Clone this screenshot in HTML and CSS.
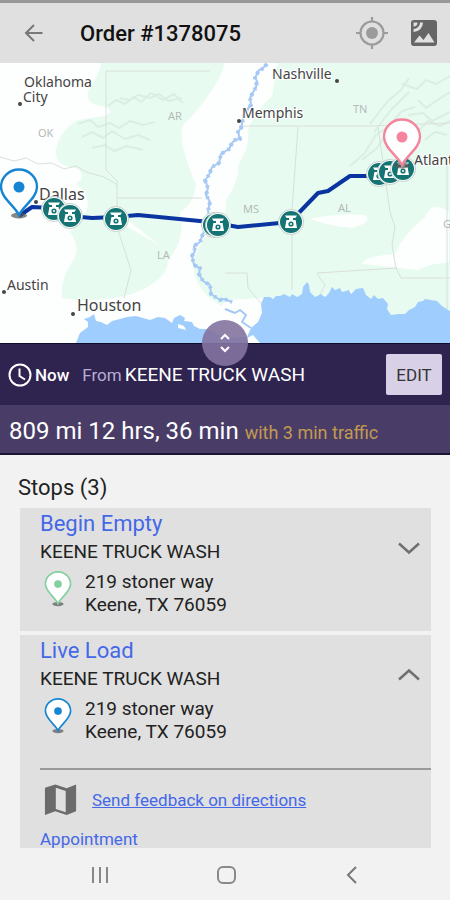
FILE: index.html
```
<!DOCTYPE html>
<html lang="en">
<head>
    <meta charset="UTF-8">
    <meta name="viewport" content="width=device-width, initial-scale=1.0">
    <title>Order #1378075</title>
    <link rel="stylesheet" href="styles.css">
</head>
<body>
    <header class="app-bar">
        <button class="icon-btn" aria-label="Back">
            <svg width="24" height="24" viewBox="0 0 24 24" fill="none" stroke="#777" stroke-width="2"><path d="M20.500 12H4M12 4L4 12L12 20"/></svg>
        </button>
        <h1>Order #1378075</h1>
        <button class="icon-btn" aria-label="My location">
            <svg width="34" height="34" viewBox="0 0 34 34" fill="none" stroke="#9b9b9b" stroke-width="2.200">
                <circle cx="17" cy="17" r="11.500"/>
                <circle cx="17" cy="17" r="6" fill="#9b9b9b" stroke="none"/>
                <path d="M17 1v5M17 28v5M1 17h5M28 17h5"/>
            </svg>
        </button>
        <button class="icon-btn" aria-label="Satellite view">
            <svg width="28" height="28" viewBox="0 0 28 28">
                <rect x="1" y="1" width="26" height="26" rx="3" fill="#666"/>
                <path d="M3.500 3.500h4a4 4 0 0 1-4 4zM10 3.500h3a9.500 9.500 0 0 1-9.500 9.500v-3a6.500 6.500 0 0 0 6.500-6.500zM4 23.500l5.500-7 4 4.500 5-7 6 9.500z" fill="#e0e0e0"/>
            </svg>
        </button>
    </header>

    <section class="map" aria-label="Route map">
        <svg class="map-canvas" viewBox="0 63 450 280" preserveAspectRatio="xMidYMid slice">
            <defs>
                <symbol id="scale" viewBox="0 0 28 28">
                    <circle cx="14" cy="14" r="12.500" fill="#fff" stroke="#c3d0cc"/>
                    <circle cx="14" cy="14" r="11" fill="#147474"/>
                    <path d="M8 7.500h12l-1.600 2.600H9.600z" fill="#fff"/>
                    <path d="M12 10h4v2h2.600l1.400 8H8l1.400-8H12z" fill="#fff"/>
                    <circle cx="14" cy="16" r="2.600" fill="#147474"/>
                    <circle cx="14" cy="16" r="1" fill="#fff"/>
                </symbol>
                <symbol id="pin" viewBox="0 0 40 52">
                    <ellipse class="pin-shadow" cx="20" cy="47.500" rx="8" ry="3"/>
                    <path d="M20 47C16 38 2 30 2 19a18 17.500 0 0 1 36 0C38 30 24 38 20 47z" fill="#fff" stroke="currentColor" stroke-width="2.400"/>
                    <circle cx="20" cy="19" r="5.500" fill="currentColor"/>
                </symbol>
            </defs>

            <rect x="0" y="63" width="450" height="280" fill="#fdfefe"/>

            <!-- forests -->
            <g class="forest">
                <path d="M102 63H225Q221 78 208 96T184 124Q178 134 186 158T196 184Q194 204 180 212Q186 240 168 260Q168 280 132 294Q96 304 62 298Q60 280 72 262Q82 250 70 232Q84 220 88 206Q88 192 76 184Q88 176 76 168Q54 166 56 150Q60 130 78 120L106 116Q116 108 100 106Q86 104 88 92Q96 80 102 63z"/>
                <path d="M278 63H450V343H394L380 302L350 290L310 298L262 298L248 300L226 308Q194 294 193 262Q202 236 216 228Q228 214 226 200Q240 180 238 165Q250 148 248 130Q256 110 272 96z"/>
            </g>
            <g fill="#fdfefe">
                <path d="M362 264Q364 256 395 254Q402 236 425 217Q432 200 449 212V262L430 265L418 270L400 268z"/>
                <path d="M309 219Q334 213 365 215Q374 222 352 228Q330 226 309 219z"/>
                <path d="M128 220L160 246L150 240L126 226z"/>
                <path d="M226 300L262 298L258 343H215L205 330z"/>
            </g>

            <!-- hills -->
            <g class="relief">
                <path d="M108 106l8-6 9 4 9-7 7 5 10-9 12 7 11-6 9 9"/>
                <path d="M120 98l9 2 9-5 12 3 9-4 9 7 14-3"/>
                <path d="M78 124l12-4 8 7 12-4 9 5 11-7 13 4 12-3"/>
                <path d="M82 137l10-5 11 6 9-7 13 8 13-4 12 5"/>
                <path d="M92 148l13-3 9 6 13-5 16 4"/>
                <path d="M370 124l10-13 8-10 13-11 8-12M374 132l17-22 18-18"/>
                <path d="M350 166l14-12 12-19 12-8 14-16 13-4M362 160l15-12 9-14"/>
                <path d="M418 100l8 8 10-7 14-9M408 115l15-2 9 8 18-9M418 131l10-10 12 5 10-5"/>
                <path d="M402 84l15 5 9-9 10 4 14-8M425 140l10-8 12 3"/>
            </g>

            <!-- state lines -->
            <g class="border">
                <path d="M106 71H210M106 71V170L117 181V198H202M117 198L118 230L131 270L124 298"/>
                <path d="M0 157l14 4 12-3 12 6 14-1 12 6 12-3 10 6 18 5 14 8"/>
                <path d="M239 126H370L450 123M298 127L292 210V290M378 127L390 212L395 227L392 245L396 268L401 278H450"/>
                <path d="M317 273L397 268M225 273H247L248 288L261 303M317 274L325 285L320 295M447 160V324"/>
            </g>

            <!-- gulf -->
            <path fill="#9fcdfd" d="M76 343L80 333L88 327L88 322L84 319L90 317L94 314L96 321L101 322L107 325L112 321L120 319L127 317L136 316L143 318L150 320L158 317L165 318L172 323L174 318L180 315L185 318L184 321L192 322L194 326L200 329L206 329L212 331L225 338L247 337L251 328L258 322L262 313L261 304L264 297L270 297L273 299L276 296L280 296L284 294L290 297L292 294L297 297L302 294L303 287L307 282L309 285L310 292L315 297L321 294L325 297L329 293L332 287L335 290L340 288L342 292L349 290L351 294L356 289L363 288L366 295L371 299L374 295L378 299L383 298L388 304L387 309L391 315L398 314L405 314L409 310L415 307L418 302L423 301L425 299L431 300L437 301L442 306L448 310L450 311V343z"/>
            <path fill="#fdfefe" d="M178 324l6 2 2 4-8-2zM247 338l6-3 7 8h-12z"/>

            <!-- Mississippi river -->
            <g class="river">
                <path id="river" d="M267 64l-5 5-3 1-4 8 2 3-1 6-6 11 1 7-5 6-3 8-2 9-3 4 2 7-5 1-3 3-3 6-8 5-2 9-7 4-3 8-4 5 3 8-2 7 4 7-2 9 2 9-1 9-5 2-4 11-6 4 1 5-3 5 2 9 6 3-1 6 4 7 7 4 1 9 9 6 4-1 8 3"/>
                <use class="river-banks" href="#river"/>
                <path d="M225 309l10 4 5-3 6 5-4 7 9 6"/>
            </g>

            <!-- route -->
            <path class="route" d="M19 216L32 207L52 208L70 216L92 218L116 217L138 215L210 222L238 227L290 222L318 193L328 191L350 176H376"/>

            <g fill="#444">
                <circle cx="20" cy="104" r="2"/><circle cx="337" cy="81" r="2"/><circle cx="239" cy="121" r="2"/>
                <circle cx="36" cy="202" r="2"/><circle cx="4" cy="292" r="2"/><circle cx="73" cy="314" r="2"/>
            </g>
            <g class="city">
                <text x="24" y="87">Oklahoma</text>
                <text x="23" y="102">City</text>
                <text x="272" y="79">Nashville</text>
                <text x="242" y="118">Memphis</text>
                <text x="7" y="290">Austin</text>
                <text x="414" y="165">Atlanta</text>
                <text class="big" x="39" y="200">Dallas</text>
                <text class="big" x="77" y="311">Houston</text>
            </g>
            <g class="state">
                <text x="38" y="137">OK</text>
                <text x="168" y="120">AR</text>
                <text x="353" y="113">TN</text>
                <text x="157" y="259">LA</text>
                <text x="243" y="213">MS</text>
                <text x="338" y="212">AL</text>
                <text x="443" y="228">GA</text>
            </g>

            <use href="#scale" x="40" y="195" width="28" height="28"/>
            <use href="#scale" x="56" y="202" width="28" height="28"/>
            <use href="#scale" x="102" y="205" width="28" height="28"/>
            <use href="#scale" x="200" y="211" width="28" height="28"/>
            <use href="#scale" x="204" y="211" width="28" height="28"/>
            <use href="#scale" x="277" y="208" width="28" height="28"/>
            <use href="#scale" x="365" y="160" width="28" height="28"/>
            <use href="#scale" x="376" y="158" width="28" height="28"/>
            <use href="#scale" x="389" y="155" width="28" height="28"/>
            <use class="pin-blue" href="#pin" x="-1" y="168" width="40" height="52"/>
            <use class="pin-pink" href="#pin" x="382" y="118" width="40" height="52"/>
        </svg>
        <button class="map-handle" aria-label="Resize map">
            <svg width="16" height="24" viewBox="0 0 16 24" fill="none" stroke="#fff" stroke-width="2"><path d="M4 8l4-4 4 4M4 16l4 4 4-4"/></svg>
        </button>
    </section>

    <section class="origin">
        <svg width="24" height="24" viewBox="0 0 24 24" fill="none" stroke="#fff" stroke-width="2"><circle cx="12" cy="12" r="10.500"/><path d="M11.500 5.500V13l5.500 3.500"/></svg>
        <span class="now">Now</span>
        <span class="from">From</span>
        <span class="place">KEENE TRUCK WASH</span>
        <button class="edit-btn">EDIT</button>
    </section>

    <section class="summary">
        <span class="distance">809 mi 12 hrs, 36 min</span>
        <span class="traffic">with 3 min traffic</span>
    </section>

    <main class="stops">
        <h2>Stops (3)</h2>
        <article class="stop">
            <div class="stop-head">
                <div>
                    <h3>Begin Empty</h3>
                    <p class="name">KEENE TRUCK WASH</p>
                </div>
                <button class="icon-btn" aria-label="Expand">
                    <svg width="24" height="24" viewBox="0 0 24 24" fill="none" stroke="#707070" stroke-width="2.500"><path d="M2 7.500l10 9 10-9"/></svg>
                </button>
            </div>
            <div class="address">
                <svg class="pin-green" width="28" height="38"><use href="#pin"/></svg>
                <p>219 stoner way<br>Keene, TX 76059</p>
            </div>
        </article>
        <article class="stop">
            <div class="stop-head">
                <div>
                    <h3>Live Load</h3>
                    <p class="name">KEENE TRUCK WASH</p>
                </div>
                <button class="icon-btn" aria-label="Collapse">
                    <svg width="24" height="24" viewBox="0 0 24 24" fill="none" stroke="#707070" stroke-width="2.500"><path d="M2 16.500l10-9 10 9"/></svg>
                </button>
            </div>
            <div class="address">
                <svg class="pin-blue" width="28" height="38"><use href="#pin"/></svg>
                <p>219 stoner way<br>Keene, TX 76059</p>
            </div>
            <div class="details">
                <div class="feedback">
                    <svg width="34" height="36" viewBox="0 0 36 36"><path fill="#6b6b6b" fill-rule="evenodd" d="M1 5l11-3.500 12 4L34 1.500V30l-10 4-12-4L1 34zM12.500 5v22.500l10.500 3.500V8.500z"/></svg>
                    <a href="#">Send feedback on directions</a>
                </div>
                <h4>Appointment</h4>
            </div>
        </article>
    </main>

    <nav class="system-nav">
        <button class="icon-btn" aria-label="Recent apps">
            <svg width="24" height="24" viewBox="0 0 24 24" stroke="#888" stroke-width="2"><path d="M5 4v16M12 4v16M19 4v16"/></svg>
        </button>
        <button class="icon-btn" aria-label="Home">
            <svg width="24" height="24" viewBox="0 0 24 24" fill="none" stroke="#888" stroke-width="2"><rect x="4" y="4" width="17" height="16" rx="5"/></svg>
        </button>
        <button class="icon-btn" aria-label="Back">
            <svg width="24" height="24" viewBox="0 0 24 24" fill="none" stroke="#777" stroke-width="2"><path d="M16 4l-8 8 8 8"/></svg>
        </button>
    </nav>
</body>
</html>
```
FILE: styles.css
```
:root {
    --page: #f2f2f2;
    --panel: #e0e0e0;
    --purple-dark: #2f2350;
    --purple: #493d68;
    --link: #4468e8;
}

* {
    box-sizing: border-box;
}

body {
    display: flex;
    flex-direction: column;
    height: 100vh;
    margin: 0;
    overflow: hidden;
    background: var(--page);
    color: #222;
    font-family: Roboto, sans-serif;
}

h1, h2, h3, h4, p {
    margin: 0;
    font-weight: 400;
}

button {
    padding: 0;
    border: none;
    background: none;
    color: inherit;
    font-family: inherit;
    cursor: pointer;
}

svg {
    flex: none;
}

.icon-btn {
    display: flex;
    flex: none;
}

.app-bar {
    display: flex;
    flex: none;
    align-items: center;
    height: 63px;
    padding: 0 12px 0 22px;
    border-top: 3px solid #999;
    background: var(--panel);
}

.app-bar h1 {
    flex: 1;
    padding-left: 34px;
    color: #111;
    font-size: 22px;
    font-weight: 500;
}

.app-bar .icon-btn + .icon-btn {
    margin-left: 21px;
}

.map {
    position: relative;
    flex: none;
    height: 280px;
}

.map-canvas {
    display: block;
    width: 100%;
    height: 100%;
}

.map-canvas text {
    font-family: "Noto Sans", sans-serif;
}

.city {
    fill: #444;
    stroke: #fff;
    stroke-width: 2px;
    paint-order: stroke;
    font-size: 14px;
}

.city .big {
    font-size: 16px;
}

.state {
    fill: #b4bab8;
    font-size: 11px;
}

.forest {
    fill: #e8fbf0;
}

.relief {
    fill: none;
    stroke: #dbeee3;
    stroke-width: 2px;
    stroke-linejoin: round;
}

.border {
    fill: none;
    stroke: #d8e0dc;
    stroke-width: 1px;
}

.river {
    fill: none;
    stroke: #a5c8f5;
    stroke-width: 2px;
    stroke-linejoin: round;
}

.river-banks {
    stroke-width: 4px;
    stroke-dasharray: 3 3 2 4;
}

.route {
    fill: none;
    stroke: #0a35a0;
    stroke-width: 4px;
    stroke-linejoin: round;
}

.pin-shadow {
    fill: #555;
    opacity: 0.7;
}

.pin-blue {
    color: #1686d2;
}

.pin-pink {
    color: #f4859c;
}

.pin-green {
    color: #84cf9f;
}

.map-handle {
    position: absolute;
    bottom: -23px;
    left: 50%;
    display: flex;
    align-items: center;
    justify-content: center;
    width: 46px;
    height: 46px;
    border-radius: 50%;
    background: rgba(132, 115, 160, 0.9);
    transform: translateX(-50%);
}

.origin {
    display: flex;
    flex: none;
    align-items: center;
    height: 62px;
    padding: 0 8px;
    border-top: 1px solid #120c2c;
    background: var(--purple-dark);
    color: #fff;
    font-size: 19px;
}

.now {
    margin-left: 3px;
    font-size: 17px;
    font-weight: 500;
}

.from {
    margin-left: 13px;
    color: #b9aed2;
    font-size: 17px;
}

.place {
    margin-left: 3px;
}

.edit-btn {
    width: 56px;
    height: 41px;
    margin-left: auto;
    border-radius: 2px;
    background: #d8d0e6;
    color: #333;
    font-size: 17px;
}

.summary {
    display: flex;
    flex: none;
    align-items: baseline;
    gap: 6px;
    height: 50px;
    padding: 12px 9px;
    border-bottom: 2px solid #1c1433;
    background: var(--purple);
}

.distance {
    color: #fff;
    font-size: 24px;
}

.traffic {
    color: #c39a50;
    font-size: 18px;
}

.stops {
    flex: 1;
    min-height: 0;
    padding: 19px 19px 0 18px;
    overflow: hidden;
}

.stops h2 {
    margin-bottom: 6px;
    font-size: 22px;
    line-height: 28px;
}

.stop {
    margin: 0 0 4px 2px;
    padding: 2px 0 15px 20px;
    background: var(--panel);
}

.stop-head {
    display: flex;
    align-items: flex-end;
    justify-content: space-between;
    padding-right: 10px;
}

.stop-head .icon-btn {
    padding-bottom: 5px;
}

.stop h3 {
    color: var(--link);
    font-size: 22px;
    line-height: 28px;
}

.name {
    font-size: 19px;
    line-height: 27px;
}

.address {
    display: flex;
    gap: 13px;
    padding: 5px 0 0 4px;
    font-size: 19px;
    line-height: 23px;
}

.details {
    margin-top: 25px;
    border-top: 2px solid #999;
}

.feedback {
    display: flex;
    align-items: center;
    gap: 14px;
    padding: 12px 0 9px 4px;
}

.feedback a {
    color: var(--link);
    font-size: 17px;
}

.stop h4 {
    color: var(--link);
    font-size: 17px;
    line-height: 24px;
}

.system-nav {
    display: flex;
    flex: none;
    align-items: center;
    justify-content: space-between;
    height: 52px;
    padding: 2px 86px 0 88px;
    background: var(--page);
}
```
